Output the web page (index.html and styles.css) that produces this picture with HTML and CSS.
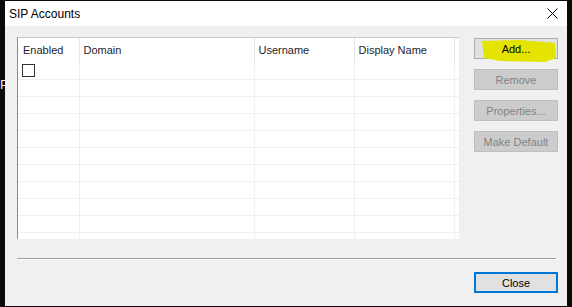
FILE: index.html
```html
<!DOCTYPE html>
<html lang="en">
<head>
    <meta charset="UTF-8">
    <title>SIP Accounts</title>
    <link rel="stylesheet" href="styles.css">
</head>
<body>

    <!-- bit of the window behind the dialog -->
    <span class="behind">P</span>

    <div class="dialog">
        <div class="titlebar">
            <span class="title">SIP Accounts</span>
            <svg class="close-x" width="11" height="11" viewBox="0 0 11 11">
                <path d="M0.5 0.5 L10.5 10.5 M10.5 0.5 L0.5 10.5" stroke="#000" stroke-width="1" fill="none"/>
            </svg>
        </div>

        <div class="content">
            <div class="top">
                <!-- Accounts list -->
                <div class="list">
                    <table>
                        <thead>
                            <tr>
                                <th class="col-enabled">Enabled</th>
                                <th class="col-domain">Domain</th>
                                <th class="col-user">Username</th>
                                <th class="col-display">Display Name</th>
                                <th class="col-rest"></th>
                            </tr>
                        </thead>
                        <tbody>
                            <tr>
                                <td><span class="checkbox"></span></td>
                                <td></td><td></td><td></td><td></td>
                            </tr>
                            <tr><td></td><td></td><td></td><td></td><td></td></tr>
                            <tr><td></td><td></td><td></td><td></td><td></td></tr>
                            <tr><td></td><td></td><td></td><td></td><td></td></tr>
                            <tr><td></td><td></td><td></td><td></td><td></td></tr>
                            <tr><td></td><td></td><td></td><td></td><td></td></tr>
                            <tr><td></td><td></td><td></td><td></td><td></td></tr>
                            <tr><td></td><td></td><td></td><td></td><td></td></tr>
                            <tr><td></td><td></td><td></td><td></td><td></td></tr>
                            <tr><td></td><td></td><td></td><td></td><td></td></tr>
                            <tr><td></td><td></td><td></td><td></td><td></td></tr>
                        </tbody>
                    </table>
                </div>

                <!-- Side buttons -->
                <div class="buttons">
                    <button class="btn add">
                        <svg class="marker" width="90" height="28" viewBox="0 0 90 28">
                            <polygon points="8,3 46,2 81,5 82,20 71,24 26,23 10,20" fill="#e4e400"/>
                        </svg>
                        <span class="label">Add...</span>
                    </button>
                    <button class="btn" disabled>Remove</button>
                    <button class="btn" disabled>Properties...</button>
                    <button class="btn" disabled>Make Default</button>
                </div>
            </div>

            <div class="separator"></div>

            <div class="footer">
                <button class="btn default">Close</button>
            </div>
        </div>
    </div>

</body>
</html>
```

FILE: styles.css
```css
body {
    margin: 0;
    padding: 0;
    background: #0a0a0a;
    font-family: "Liberation Sans", Arial, sans-serif;
    width: 572px;
    height: 307px;
    overflow: hidden;
}

.behind {
    position: absolute;
    left: 0;
    top: 77px;
    color: #e6e6ee;
    font-size: 13px;
}

.dialog {
    position: relative;
    margin: 1px 0 0 5px;
    width: 562px;
    height: 305px;
    background: #f0f0f0;
    display: flex;
    flex-direction: column;
}

/* Title bar */
.titlebar {
    height: 25px;
    background: #fff;
    display: flex;
    align-items: center;
    justify-content: space-between;
    padding: 0 9px 0 4px;
}

.title {
    font-size: 12px;
    color: #000;
}

.close-x {
    display: block;
    margin-top: -1px;
}

/* Body */
.content {
    padding: 11px 0 0 12px;
}

.top {
    display: flex;
}

.list {
    width: 441px;
    height: 201px;
    background: #fff;
    border-left: 1px solid #8c8c8c;
    border-top: 1px solid #c8c8c8;
    overflow: hidden;
}

.list table {
    border-collapse: collapse;
    table-layout: fixed;
    width: 441px;
}

.list th,
.list td {
    box-sizing: border-box;
}

.list th {
    height: 24px;
    padding: 0 0 0 4px;
    font-size: 11px;
    font-weight: normal;
    text-align: left;
    color: #1c1c2c;
    border-right: 1px solid #e5e5e5;
    white-space: nowrap;
    overflow: hidden;
}

.list th.col-enabled {
    padding-left: 5px;
}

.list td {
    height: 17px;
    padding: 0 0 0 4px;
    border-right: 1px solid #f0f0f0;
    border-bottom: 1px solid #f0f0f0;
}

.list th.col-rest {
    border-right: none;
}

.col-enabled { width: 61px; }
.col-domain { width: 175px; }
.col-user { width: 100px; }
.col-display { width: 100px; }
.col-rest { width: 5px; }

.checkbox {
    display: block;
    width: 11px;
    height: 11px;
    border: 1px solid #333;
    background: #fff;
}

/* Buttons */
.buttons {
    margin-left: 15px;
    padding-top: 1px;
    display: flex;
    flex-direction: column;
    gap: 10px;
}

.btn {
    width: 84px;
    height: 21px;
    padding: 0;
    font-family: "Liberation Sans", Arial, sans-serif;
    font-size: 11px;
    color: #000;
    background: #e1e1e1;
    border: 1px solid #adadad;
    border-radius: 0;
}

.btn:disabled {
    background: #cccccc;
    border-color: #bfbfbf;
    color: #838383;
}

.btn.add {
    position: relative;
}

.btn.add .label {
    position: relative;
}

.marker {
    position: absolute;
    left: -1px;
    top: -1px;
}

.separator {
    width: 539px;
    margin-top: 19px;
    border-top: 1px solid #a0a0a0;
    border-bottom: 1px solid #fff;
}

.footer {
    display: flex;
    justify-content: flex-end;
    width: 541px;
    margin-top: 12px;
}

.btn.default {
    border: 2px solid #0078d7;
}
```
